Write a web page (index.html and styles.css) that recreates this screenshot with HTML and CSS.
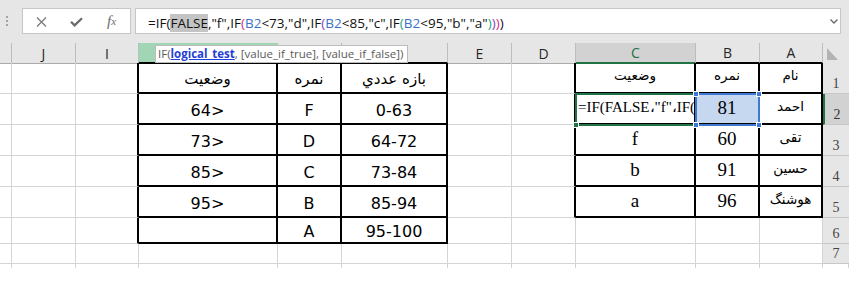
FILE: index.html
```html
<!DOCTYPE html>
<html lang="fa">
<head>
  <meta charset="UTF-8">
  <meta name="viewport" content="width=device-width, initial-scale=1.0">
  <title>IF</title>
  <link rel="stylesheet" href="styles.css">
</head>
<body>
  <div class="formula-bar">
    <div class="grip"><i></i><i></i><i></i></div>
    <div class="fx-box">
      <span class="btn">
        <svg width="11" height="10" viewBox="0 0 11 10"><path d="M1 0.5 L10 9.5 M10 0.5 L1 9.5" stroke="#7a7a7a" stroke-width="1.3" fill="none"/></svg>
      </span>
      <span class="btn">
        <svg width="13" height="10" viewBox="0 0 13 10"><path d="M1 4.8 L4.6 8.4 L12 1.2" stroke="#6b6b6b" stroke-width="2.3" fill="none"/></svg>
      </span>
      <span class="btn fx">f<sub>x</sub></span>
    </div>
    <div class="formula">
      <span class="ftext">=IF(<span class="hl">FALSE</span>,"f",IF<span class="p1">(</span><span class="ref">B2</span>&lt;73,"d",IF<span class="p2">(</span><span class="ref">B2</span>&lt;85,"c",IF<span class="p3">(</span><span class="ref">B2</span>&lt;95,"b","a"<span class="p3">)</span><span class="p2">)</span><span class="p1">)</span>)</span>
      <svg class="chev" width="8" height="5" viewBox="0 0 8 5"><path d="M0.5 0.5 L4 4 L7.5 0.5" stroke="#6a6a6a" stroke-width="1.4" fill="none"/></svg>
    </div>
  </div>

  <div class="sheet">
    <div class="row hdr">
      <div></div>
      <div>J</div>
      <div>I</div>
      <div class="col-hl top"></div>
      <div class="top"></div>
      <div class="top"></div>
      <div>E</div>
      <div>D</div>
      <div class="col-cur">C</div>
      <div class="top">B</div>
      <div class="top">A</div>
      <div class="corner"><svg width="11" height="12" viewBox="0 0 11 12"><polygon points="0,0 0,12 11,12" fill="#b3b3b3"/></svg></div>
    </div>

    <div class="row r31">
      <div></div><div></div><div class="e"></div>
      <div class="t l"><span class="fa">وضعيت</span></div>
      <div class="t l"><span class="fa">نمره</span></div>
      <div class="t l"><span class="fa">بازه عددي</span></div>
      <div></div><div class="e"></div>
      <div class="t r"><span class="fa">وضعيت</span></div>
      <div class="t r"><span class="fa">نمره</span></div>
      <div class="t r"><span class="fa">نام</span></div>
      <div class="rh">1</div>
    </div>

    <div class="row r31">
      <div></div><div></div><div class="e"></div>
      <div class="t l">64&gt;</div>
      <div class="t l">F</div>
      <div class="t l">0-63</div>
      <div></div><div class="e"></div>
      <div class="t r cell-edit"><span class="clip">=IF(FALSE،"f"،IF(</span></div>
      <div class="t r picked">81</div>
      <div class="t r"><span class="fa">احمد</span></div>
      <div class="rh rh-cur">2</div>
    </div>

    <div class="row r31">
      <div></div><div></div><div class="e"></div>
      <div class="t l">73&gt;</div>
      <div class="t l">D</div>
      <div class="t l">64-72</div>
      <div></div><div class="e"></div>
      <div class="t r">f</div>
      <div class="t r">60</div>
      <div class="t r"><span class="fa">تقی</span></div>
      <div class="rh">3</div>
    </div>

    <div class="row r31">
      <div></div><div></div><div class="e"></div>
      <div class="t l">85&gt;</div>
      <div class="t l">C</div>
      <div class="t l">73-84</div>
      <div></div><div class="e"></div>
      <div class="t r">b</div>
      <div class="t r">91</div>
      <div class="t r"><span class="fa">حسین</span></div>
      <div class="rh">4</div>
    </div>

    <div class="row r31">
      <div></div><div></div><div class="e"></div>
      <div class="t l">95&gt;</div>
      <div class="t l">B</div>
      <div class="t l">85-94</div>
      <div></div><div class="e"></div>
      <div class="t r">a</div>
      <div class="t r">96</div>
      <div class="t r"><span class="fa">هوشنگ</span></div>
      <div class="rh">5</div>
    </div>

    <div class="row r26">
      <div></div><div></div><div class="e"></div>
      <div class="t l"></div>
      <div class="t l">A</div>
      <div class="t l">95-100</div>
      <div></div><div></div><div></div><div></div><div></div>
      <div class="rh">6</div>
    </div>

    <div class="row r20">
      <div></div><div></div><div></div><div></div><div></div><div></div>
      <div></div><div></div><div></div><div></div><div></div>
      <div class="rh">7</div>
    </div>

    <div class="row stub">
      <div></div><div></div><div></div><div></div><div></div><div></div>
      <div></div><div></div><div></div><div></div><div></div><div></div>
    </div>

    <div class="tooltip">IF(<a>logical_test</a>, [value_if_true], [value_if_false])</div>
    <div class="active"><i></i></div>
    <div class="range"><i class="nw"></i><i class="ne"></i><i class="sw"></i><i class="se"></i></div>
  </div>
</body>
</html>
```

FILE: styles.css
```css
* {
  box-sizing: border-box;
}

body {
  margin: 0;
  width: 849px;
  height: 289px;
  overflow: hidden;
  background: #ffffff;
  font-family: "Open Sans", sans-serif;
  color: #000;
}

/* formula bar */
.formula-bar {
  height: 43px;
  background: #e6e6e6;
  display: flex;
  align-items: flex-start;
  padding-top: 8px;
}

.grip {
  width: 22px;
  display: flex;
  flex-direction: column;
  gap: 2px;
  padding: 8px 0 0 6px;
}

.grip i {
  width: 2px;
  height: 2px;
  background: #a3a3a3;
}

.fx-box {
  width: 109px;
  height: 26px;
  background: #fff;
  border: 1px solid #c6c6c6;
  display: flex;
  align-items: center;
  padding-left: 1px;
}

.btn {
  width: 35px;
  display: flex;
  justify-content: center;
  align-items: center;
  padding-top: 1px;
}

.fx {
  font-family: "Liberation Serif", serif;
  font-style: italic;
  font-size: 15px;
  color: #6b6b6b;
  line-height: 1;
}

.fx sub {
  font-size: 11px;
  vertical-align: -2px;
}

.formula {
  margin-left: 4px;
  width: 706px;
  height: 26px;
  background: #fff;
  border: 1px solid #c6c6c6;
  display: flex;
  align-items: flex-start;
  padding-left: 12px;
}

.ftext {
  font-size: 13.5px;
  line-height: 18px;
  margin-top: 5px;
  white-space: nowrap;
  color: #111;
}

.hl {
  background: #c4c4c4;
}

.ref {
  color: #3a72c8;
}

.p1 {
  color: #e0267a;
}

.p2 {
  color: #8a3cb0;
}

.p3 {
  color: #1ba57a;
}

.chev {
  margin: 10px 2px 0 auto;
}

/* sheet */
.sheet {
  position: relative;
}

.row {
  display: grid;
  grid-template-columns: 12px 64px 63px 139px 64px 106px 64px 64px 120px 64px 63px 26px;
}

.row > div {
  border-right: 1px solid #d4d4d4;
  border-bottom: 1px solid #d4d4d4;
  display: flex;
  align-items: center;
  justify-content: center;
  white-space: nowrap;
}

.r31 {
  height: 31px;
}

.r26 {
  height: 26px;
}

.r20 {
  height: 20px;
}

.stub {
  height: 4px;
}

.stub > div {
  border-bottom: none !important;
}

.hdr {
  height: 20px;
}

.hdr > div {
  background: #e6e6e6;
  border-right: 1px solid #bdbdbd;
  border-bottom: 1px solid #ababab;
  font-size: 14px;
  color: #262626;
}

.hdr .top {
  border-bottom: 2px solid #000;
}

.hdr .col-hl {
  background: #a0d6b6;
}

.hdr .col-cur {
  background: #d2d2d2;
  border-bottom: 2px solid #217346;
  color: #217346;
}

.hdr .corner {
  border-right: none;
  justify-content: flex-start;
  align-items: flex-end;
  padding: 0 0 3px 4px;
}

.row > .t {
  border-right: 2px solid #000;
  border-bottom: 2px solid #000;
}

.row > .e {
  border-right: 2px solid #000;
}

.l {
  font-family: "DejaVu Sans", sans-serif;
  font-size: 16px;
  padding-top: 3px;
}

.r {
  font-family: "Liberation Serif", serif;
  font-size: 19px;
  line-height: 1;
  padding-bottom: 3px;
}

.fa {
  font-family: "DejaVu Sans", sans-serif;
  font-size: 15px;
  direction: rtl;
}

.r .fa {
  font-size: 13.5px;
}

.picked {
  background: #c6d7f0;
}

.row > .cell-edit {
  justify-content: flex-start;
  overflow: hidden;
  padding-left: 2px;
}

.clip {
  font-size: 15px;
}

.row > .rh {
  background: #e6e6e6;
  border-right: none;
  border-bottom: 1px solid #c8c8c8;
  font-family: "Liberation Serif", serif;
  font-size: 14px;
  line-height: 14px;
  color: #444;
  align-items: flex-end;
  padding-bottom: 2px;
}

.row > .rh-cur {
  background: #d2d2d2;
  border-left: 2px solid #217346;
  color: #333;
}

/* overlays */
.tooltip {
  position: absolute;
  left: 155px;
  top: 2px;
  width: 253px;
  height: 18px;
  background: #fff;
  border: 1px solid #bcbcbc;
  font-size: 11.5px;
  line-height: 16px;
  padding-left: 2px;
  color: #5a5a5a;
  white-space: nowrap;
}

.tooltip a {
  color: #1f3fd6;
  font-weight: bold;
  text-decoration: underline;
}

.active {
  position: absolute;
  left: 575px;
  top: 50px;
  width: 122px;
  height: 33px;
  border: 2px solid #217346;
}

.active i {
  position: absolute;
  left: -4px;
  bottom: -4px;
  width: 6px;
  height: 6px;
  background: #217346;
  border: 1px solid #fff;
}

.range {
  position: absolute;
  left: 695px;
  top: 50px;
  width: 65px;
  height: 33px;
  border: 2px solid #3f78d2;
}

.range i {
  position: absolute;
  width: 6px;
  height: 6px;
  background: #3f78d2;
  border: 1px solid #fff;
}

.range .nw {
  left: -4px;
  top: -4px;
}

.range .ne {
  right: -4px;
  top: -4px;
}

.range .sw {
  left: -4px;
  bottom: -4px;
}

.range .se {
  right: -4px;
  bottom: -4px;
}
```
